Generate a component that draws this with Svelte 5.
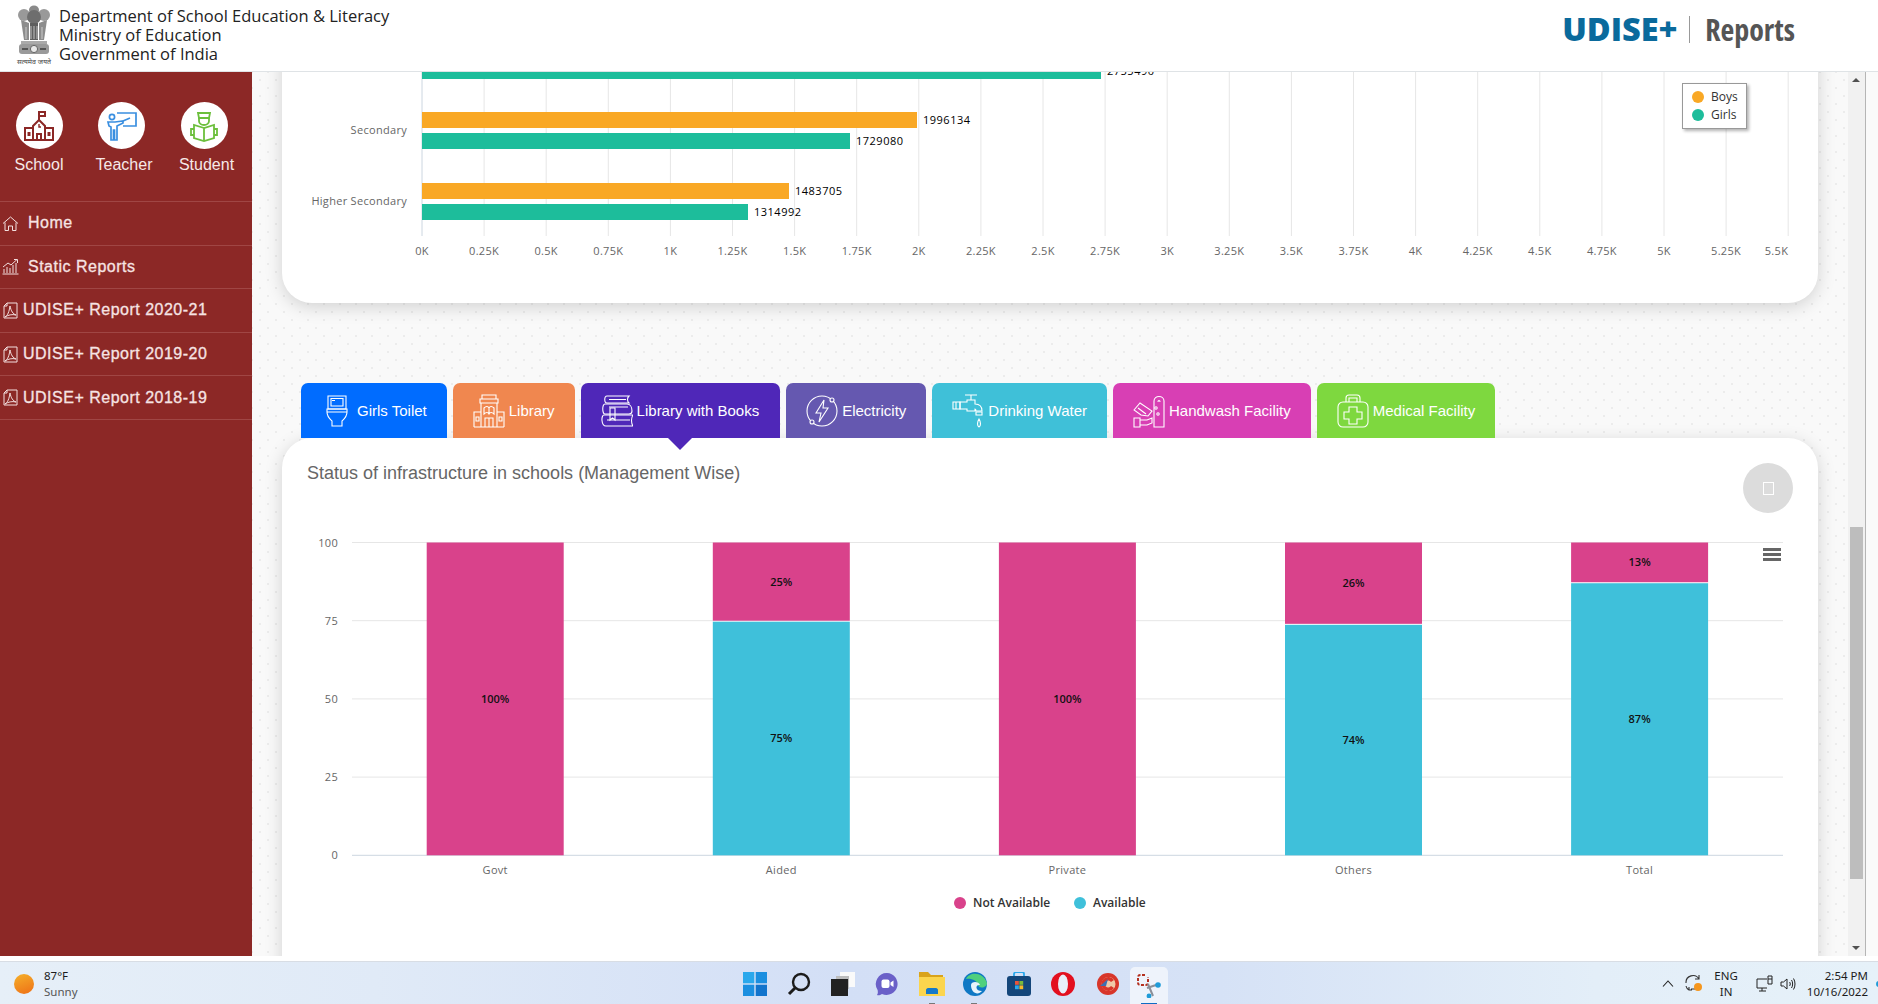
<script>
	const sideLinks = [
		{ label: "Home", icon: "home" },
		{ label: "Static Reports", icon: "chart" },
		{ label: "UDISE+ Report 2020-21", icon: "pdf" },
		{ label: "UDISE+ Report 2019-20", icon: "pdf" },
		{ label: "UDISE+ Report 2018-19", icon: "pdf" }
	];

	const tabs = [
		{ label: "Girls Toilet", icon: "toilet", color: "#006cff" },
		{ label: "Library", icon: "library", color: "#f0874f" },
		{ label: "Library with Books", icon: "books", color: "#4f27b8", active: true },
		{ label: "Electricity", icon: "power", color: "#6558b0" },
		{ label: "Drinking Water", icon: "tap", color: "#3fc0d8" },
		{ label: "Handwash Facility", icon: "wash", color: "#d83fb4" },
		{ label: "Medical Facility", icon: "kit", color: "#7ed83f" }
	];

	// enrolment chart: page coordinates, one K step is 62.1px
	const x0 = 422;
	const step = 62.1;
	const ticks = ["0K","0.25K","0.5K","0.75K","1K","1.25K","1.5K","1.75K","2K","2.25K","2.5K","2.75K","3K","3.25K","3.5K","3.75K","4K","4.25K","4.5K","4.75K","5K","5.25K","5.5K"];
	const hbars = [
		{ y: 63, w: 679, v: "2755490", c: "#1dbd9b" },
		{ y: 112, w: 495, v: "1996134", c: "#f9a825" },
		{ y: 133, w: 428, v: "1729080", c: "#1dbd9b" },
		{ y: 183, w: 367, v: "1483705", c: "#f9a825" },
		{ y: 204, w: 326, v: "1314992", c: "#1dbd9b" }
	];

	// status chart: 0 is at y 855, 100 at y 542.5
	const plotTop = 542.5;
	const plotH = 312.8;
	const cols = [
		{ name: "Govt", no: 100 },
		{ name: "Aided", no: 25 },
		{ name: "Private", no: 100 },
		{ name: "Others", no: 26 },
		{ name: "Total", no: 13, h: 12.7 }
	].map((c, i) => {
		const pink = ((c.h ?? c.no) / 100) * plotH;
		return { ...c, cx: 495.2 + i * 286.1, pink };
	});
	const yticks = [100, 75, 50, 25, 0];
</script>

<div class="screen">
	<header class="top">
		<div class="brand">
			<div class="emblem">
				<svg width="36" height="52" viewBox="0 0 36 52" fill="#777">
					<ellipse cx="18" cy="5" rx="5" ry="4.5" fill="#8a8a8a" />
					<ellipse cx="8" cy="10" rx="6" ry="6" fill="#999" />
					<ellipse cx="28" cy="10" rx="6" ry="6" fill="#999" />
					<ellipse cx="18" cy="12" rx="7" ry="7" fill="#6e6e6e" />
					<path d="M5 15 L13 18 L13 35 L8 35 Z" fill="#8c8c8c" />
					<path d="M31 15 L23 18 L23 35 L28 35 Z" fill="#8c8c8c" />
					<path d="M14 18 L22 18 L22 35 L14 35 Z" fill="#5e5e5e" />
					<path d="M15 21 V34 M18 21 V34 M21 21 V34 M10 22 V34 M26 22 V34" stroke="#ddd" stroke-width="0.8" />
					<rect x="5" y="36" width="26" height="3" fill="#aaa" />
					<rect x="3" y="39" width="30" height="10" rx="3" fill="#9a9a9a" />
					<circle cx="18" cy="44" r="3.6" fill="#e8e8e8" stroke="#666" />
					<path d="M6 44 h6 M24 44 h6" stroke="#555" stroke-width="2" />
				</svg>
				<span class="motto">सत्यमेव जयते</span>
			</div>
			<div class="dept">
				<div>Department of School Education &amp; Literacy</div>
				<div>Ministry of Education</div>
				<div>Government of India</div>
			</div>
		</div>
		<div class="logo">
			<span class="udise">UDISE+</span>
			<span class="bar"></span>
			<span class="reports">Reports</span>
		</div>
	</header>

	<div class="body">
		<aside class="side">
			<div class="roles">
				<div class="role">
					<span class="disc">
						<svg width="32" height="32" viewBox="0 0 32 32" fill="none" stroke="#8c2826" stroke-width="2">
							<path d="M16 10 V2 h6 v4 h-6" />
							<path d="M10 16 L16 10 L22 16 V30 H10 Z" />
							<path d="M10 18 H2 V30 H30 V18 H22" />
							<path d="M14 30 V24 h4 V30" />
							<path d="M16 14 v3 h2" stroke-width="1.4" />
							<rect x="4.5" y="22" width="3" height="4" fill="#8c2826" stroke="none" />
							<rect x="24.5" y="22" width="3" height="4" fill="#8c2826" stroke="none" />
						</svg>
					</span>
					<span>School</span>
				</div>
				<div class="role">
					<span class="disc">
						<svg width="32" height="32" viewBox="0 0 32 32" fill="none" stroke="#3a8fe0" stroke-width="1.7">
							<circle cx="6" cy="7" r="2.6" />
							<path d="M2 12 h7 l8 -1 v2 l-6 3 v14 h-2.500 v-10 h-1 v10 h-2.500 V17 l-2 -1 z" />
							<path d="M11 3 h19 v13 h-13" />
							<path d="M17 11 l7 -3" />
						</svg>
					</span>
					<span class="nudge">Teacher</span>
				</div>
				<div class="role">
					<span class="disc">
						<svg width="32" height="32" viewBox="0 0 32 32" fill="none" stroke="#6cbf3c" stroke-width="1.8">
							<path d="M10 3 h12 l-1 5 h-10 z" />
							<path d="M11 8 v3 a5 4 0 0 0 10 0 v-3" />
							<path d="M16 18 L6 15 V28 L16 31 L26 28 V15 Z M16 18 V31" />
							<path d="M6 19 H3 v6 h3 M26 19 h3 v6 h-3" />
						</svg>
					</span>
					<span class="nudge">Student</span>
				</div>
			</div>
			<nav class="links">
				{#each sideLinks as link}
					<a class="link" class:narrow={link.icon === "pdf"} href="/">
						{#if link.icon === "home"}
							<svg width="17" height="17" viewBox="0 0 17 17" fill="none" stroke="#f3dfdf" stroke-width="1">
								<path d="M1 8.500 L8.500 2 L16 8.500 M3 7.500 V15.500 H6.500 V11 H10.500 V15.500 H14 V7.500" />
							</svg>
						{:else if link.icon === "chart"}
							<svg width="17" height="17" viewBox="0 0 17 17" fill="none" stroke="#f3dfdf" stroke-width="1">
								<path d="M0.500 16 H16.500 M2 15 V11 M5 15 V9 M8 15 V10 M11 15 V7 M14 15 V5" />
								<path d="M1 9 L6 5 L9 7 L15 1.500 M12 1.500 H15.500 V5" />
							</svg>
						{:else}
							<svg width="15" height="17" viewBox="0 0 15 17" fill="none" stroke="#f3dfdf" stroke-width="1">
								<path d="M1 16 V4 L4 1 H14 V16 Z M4 1 V4 H1" />
								<path d="M2 15 C5 13 6 10 7 4 C8 9 10 12 13 13 C9 12 5 13 2 15" />
							</svg>
						{/if}
						<span>{link.label}</span>
					</a>
				{/each}
			</nav>
		</aside>

		<main class="page">
			<section class="card first">
				<svg class="chart" width="1536" height="271" viewBox="282 32 1536 271">
					{#each ticks as t, i}
						<line x1={x0 + i * step} x2={x0 + i * step} y1="32" y2="236" stroke={i ? "#e6e6e6" : "#ccd6e0"} />
						<text class="tick" x={x0 + i * step} y="255" text-anchor={i === 22 ? "end" : "middle"}>{t}</text>
					{/each}
					<text class="tick" x="407" y="134" text-anchor="end">Secondary</text>
					<text class="tick" x="407" y="205" text-anchor="end">Higher Secondary</text>
					{#each hbars as b}
						<rect x={x0} y={b.y} width={b.w} height="16" fill={b.c} />
						<text class="val" x={x0 + b.w + 6} y={b.y + 12}>{b.v}</text>
					{/each}
				</svg>
				<div class="legend-box">
					<div><i style="background:#f9a825"></i>Boys</div>
					<div><i style="background:#1dbd9b"></i>Girls</div>
				</div>
			</section>

			<div class="tabs">
				{#each tabs as tab}
					<div class="tab" class:active={tab.active} style="background:{tab.color}">
						<span class="tab-icon">
							<svg width="32" height="34" viewBox="0 0 32 34" fill="none" stroke="#fff" stroke-width="1.100">
								{#if tab.icon === "toilet"}
									<path d="M7 2 H25 V15 H7 Z M10 4.500 H22 V12 H10 Z M11 6.500 h3" />
									<path d="M6 15 H26 V18 C26 23 22 26 21 27 V32 H11 V27 C10 26 6 23 6 18 Z M6 18 H26" />
								{:else if tab.icon === "library"}
									<path d="M9 1 H23 V5 H9 Z M7 5 H25 V9 H7 Z M8 9 V33 M24 9 V33 M1 33 H31 M8 18 H1 V33 M24 18 H31 V33" />
									<path d="M11 14 C13 12 15 12 16 14 C17 12 19 12 21 14 V20 C19 18 17 18 16 20 C15 18 13 18 11 20 Z M16 14 V20" />
									<path d="M12 33 V24 H20 V33 M16 24 V33 M3 23 H6 V27 H3 Z M26 23 H29 V27 H26 Z" />
								{:else if tab.icon === "books"}
									<path d="M6 2 H28 C26 4 26 7 28 9 H6 C3 9 3 2 6 2 Z M8 5.500 H25" />
									<path d="M4 10 H26 C29 10 31 13 31 17 C31 19 30 20 28 20 H4 C1 20 1 10 4 10 Z M8 13 H27" />
									<path d="M3 21 H32 C30 24 30 29 32 32 H5 C0 32 0 21 3 21 Z M6 26 H29" />
									<path d="M9 14 H14 V26 L11.500 24 L9 26 Z" />
								{:else if tab.icon === "power"}
									<circle cx="16" cy="17" r="15" />
									<path d="M18 6 L10 19 H15 L13 28 L22 14 H17 Z" />
									<circle cx="26" cy="6" r="2" fill="#6558b0" />
									<circle cx="6" cy="28" r="2" fill="#6558b0" />
								{:else if tab.icon === "tap"}
									<path d="M13 1 H25 M19 1 V6 M15 6 H23 V10 C28 10 30 13 30 17 H24 C24 16 24 15 23 15 V17 H15 V15 H8 V8 H15 Z" />
									<path d="M1 8 H8 V15 H1 Z M4 8 V15 M24 18 H30 V21 H24 Z" />
									<path d="M27 25 C25 28 25 32 27 33 C29 32 29 28 27 25 Z" />
								{:else if tab.icon === "wash"}
									<path d="M21 33 V7 C21 1 31 1 31 7 V33 Z M25 8 C25 6 27 6 27 8" />
									<path d="M1 16 L7 9 L19 17 L15 22 L8 21 Z M5 14 L13 20" />
									<path d="M1 24 H7 V33 H1 Z M7 26 H14 L19 24 V29 L14 31 H7" />
									<circle cx="23" cy="14" r="1.200" />
									<circle cx="25" cy="20" r="1.200" />
								{:else}
									<rect x="1" y="8" width="30" height="25" rx="5" />
									<path d="M9 8 V4 C9 2 10 1 12 1 H20 C22 1 23 2 23 4 V8 M12 8 V4 H20 V8" />
									<path d="M12 13 H20 V18 H25 V25 H20 V30 H12 V25 H7 V18 H12 Z" />
								{/if}
							</svg>
						</span>
						<span>{tab.label}</span>
					</div>
				{/each}
			</div>

			<section class="card second">
				<h2>Status of infrastructure in schools (Management Wise)</h2>
				<button class="round" aria-label="Download"><span></span></button>
				<svg class="chart" width="1536" height="530" viewBox="282 438 1536 530">
					{#each yticks as v, i}
						<line x1="352" x2="1783" y1={plotTop + i * 78.2} y2={plotTop + i * 78.2} stroke={v ? "#e6e6e6" : "#ccd6e0"} />
						<text class="tick" x="338" y={plotTop + i * 78.2 + 4} text-anchor="end">{v}</text>
					{/each}
					{#each cols as c}
						<rect x={c.cx - 68.500} y={plotTop} width="137" height={c.pink} fill="#d9428b" />
						{#if c.no < 100}
							<rect x={c.cx - 68.500} y={plotTop + c.pink + 1} width="137" height={plotH - c.pink - 1} fill="#3fc0da" />
							<text class="pct" x={c.cx} y={plotTop + c.pink / 2 + 4} text-anchor="middle">{c.no}%</text>
							<text class="pct" x={c.cx} y={plotTop + c.pink + (plotH - c.pink) / 2 + 4} text-anchor="middle">{100 - c.no}%</text>
						{:else}
							<text class="pct" x={c.cx} y={plotTop + plotH / 2 + 4} text-anchor="middle">100%</text>
						{/if}
						<text class="tick" x={c.cx} y="874" text-anchor="middle">{c.name}</text>
					{/each}
					<circle cx="960" cy="903" r="6" fill="#d9428b" />
					<text class="key" x="973" y="907">Not Available</text>
					<circle cx="1080" cy="903" r="6" fill="#3fc0da" />
					<text class="key" x="1093" y="907">Available</text>
					<path d="M1763 549.500 h18 M1763 554.500 h18 M1763 559.500 h18" stroke="#666" stroke-width="3" />
				</svg>
			</section>
		</main>

		<div class="scroll">
			<span class="arrow up"></span>
			<span class="thumb"></span>
			<span class="arrow down"></span>
		</div>
		<div class="edge"></div>
	</div>

	<div class="gap"></div>

	<footer class="taskbar">
		<div class="weather">
			<span class="sun"></span>
			<div>
				<div class="temp">87°F</div>
				<div class="sky">Sunny</div>
			</div>
		</div>
		<div class="apps">
			<!-- start -->
			<svg width="24" height="24" viewBox="0 0 24 24">
				<rect width="11.300" height="11.300" fill="#2aa8ec" />
				<rect x="12.700" width="11.300" height="11.300" fill="#1b8fe0" />
				<rect y="12.700" width="11.300" height="11.300" fill="#1b8fe0" />
				<rect x="12.700" y="12.700" width="11.300" height="11.300" fill="#1274cc" />
			</svg>
			<!-- search -->
			<svg width="24" height="24" viewBox="0 0 24 24" fill="none" stroke="#1c1c1c" stroke-width="2.400">
				<circle cx="14" cy="10" r="8" />
				<path d="M8 16 L2 22" stroke-width="3" />
			</svg>
			<!-- task view -->
			<svg width="24" height="24" viewBox="0 0 24 24">
				<rect x="9" y="0" width="15" height="15" fill="#fafafa" />
				<rect x="5" y="4" width="13" height="13" fill="#bdbdbd" />
				<rect x="0" y="7" width="17" height="17" fill="#222" />
			</svg>
			<!-- chat -->
			<svg width="24" height="24" viewBox="0 0 24 24">
				<path d="M12 1 A11 11 0 1 1 7 22 C5 23.500 3 23.500 2 23 C3 21.500 3 20 2.600 18 A11 11 0 0 1 12 1 Z" fill="#6a60c8" />
				<rect x="6.500" y="7.500" width="8" height="8.500" rx="2" fill="#fff" />
				<path d="M15.500 10.500 L18.500 8.500 V15 L15.500 13 Z" fill="#fff" />
			</svg>
			<!-- explorer -->
			<svg class="tight" width="26" height="24" viewBox="0 0 26 24">
				<path d="M0 0 H9 L12 3 H24 V8 H0 Z" fill="#d9a31c" />
				<rect y="5" width="26" height="19" fill="#fbd54e" />
				<path d="M7 22 V18 C7 17 8 16 9 16 H17 C18 16 19 17 19 18 V22 Z" fill="#1479c9" />
			</svg>
			<!-- edge -->
			<svg width="24" height="24" viewBox="0 0 24 24">
				<circle cx="12" cy="12" r="12" fill="#0f78c4" />
				<path d="M3 7 C6 0 20 -1 24 11 C24 16 16 17 15 13 C15 9 8 6 3 7 Z" fill="#4fd07e" />
				<path d="M8 13 C8 9 16 9 17 13 C12 12 12 19 19 19 C15 24 8 21 8 13 Z" fill="#e7f3fb" />
			</svg>
			<!-- store -->
			<svg width="24" height="24" viewBox="0 0 24 24">
				<path d="M7 5 V2 C7 1 8 0 9 0 H15 C16 0 17 1 17 2 V5" fill="none" stroke="#2aa8ec" stroke-width="1.800" />
				<rect y="4" width="24" height="20" rx="3" fill="#14467a" />
				<rect x="8" y="9" width="3.800" height="3.800" fill="#e8553a" />
				<rect x="12.400" y="9" width="3.800" height="3.800" fill="#7ab93b" />
				<rect x="8" y="13.400" width="3.800" height="3.800" fill="#2aa8ec" />
				<rect x="12.400" y="13.400" width="3.800" height="3.800" fill="#f5b92a" />
			</svg>
			<!-- opera -->
			<svg class="loose" width="24" height="24" viewBox="0 0 24 24">
				<ellipse cx="12" cy="12" rx="12" ry="12" fill="#e3101f" />
				<ellipse cx="12" cy="12" rx="5" ry="9.500" fill="#e8eef9" />
			</svg>
			<!-- red app -->
			<svg width="22" height="22" viewBox="0 0 22 22">
				<circle cx="11" cy="11" r="11" fill="#d8362a" />
				<circle cx="11.500" cy="11" r="7" fill="#f0c9a8" />
				<path d="M17 7 A7 7 0 1 0 17 15 L14 13 A3.500 3.500 0 1 1 14 9 Z" fill="#d8362a" />
				<path d="M3 13 L11 6 L9 13 Z" fill="#3d6fb0" />
			</svg>
			<!-- snip, the active one -->
			<span class="active-app">
				<svg width="24" height="24" viewBox="0 0 24 24" fill="none">
					<path d="M8 1 H3 C2 1 1 2 1 3 V9 C1 10 2 11 3 11 H9 C10 11 11 10 11 9 V3" stroke="#b5301e" stroke-width="2" stroke-dasharray="3 1.500" />
					<path d="M11 10 L16 22 M19 11 L10 14" stroke="#8b8f98" stroke-width="2" />
					<circle cx="21" cy="11" r="2.800" fill="#1f9bd8" />
					<circle cx="12" cy="22" r="2.400" fill="#1f9bd8" />
				</svg>
				<i></i>
			</span>
			<span class="run one"></span>
			<span class="run two"></span>
		</div>
		<div class="tray">
			<svg class="caret" width="12" height="7" viewBox="0 0 12 7" fill="none" stroke="#222" stroke-width="1.100"><path d="M1 6.500 L6 1 L11 6.500" /></svg>
			<svg width="20" height="20" viewBox="0 0 20 20" fill="none" stroke="#333" stroke-width="1.100">
				<path d="M2 9 A7 7 0 0 1 15 5 M15 1 V5 H11" />
				<path d="M13 15 H7 M5 16 A6 6 0 0 1 2 12 M5 13 V16 H8" />
				<circle cx="14" cy="13" r="4" fill="#f5961d" stroke="none" />
			</svg>
			<div class="lang"><div>ENG</div><div>IN</div></div>
			<svg class="net" width="18" height="18" viewBox="0 0 18 18" fill="none" stroke="#222" stroke-width="1"><path d="M11 4 H1 V13 H11 M6 13 V16 M3 16 H10 M12 1 H16 V9 H12 Z M12 4 H16" /></svg>
			<svg width="16" height="14" viewBox="0 0 16 14" fill="none" stroke="#222" stroke-width="1"><path d="M1 5 H3.500 L7 2 V12 L3.500 9 H1 Z M9.500 5 C10.500 6 10.500 8 9.500 9 M11.500 3 C13 5 13 9 11.500 11 M13.500 1.500 C15.500 4.500 15.500 9.500 13.500 12.500" /></svg>
			<div class="clock"><div>2:54 PM</div><div>10/16/2022</div></div>
		</div>
		<span class="peek"></span>
	</footer>
</div>

<style>
	:global(body) {
		margin: 0;
		background: #fff;
	}

	.screen {
		width: 1878px;
		height: 1004px;
		display: flex;
		flex-direction: column;
		overflow: hidden;
		font-family: "Liberation Sans", sans-serif;
	}

	.top {
		height: 71px;
		flex: none;
		display: flex;
		align-items: center;
		justify-content: space-between;
		background: #fff;
		border-bottom: 1px solid #dfe3e6;
		position: relative;
		z-index: 5;
	}

	.brand {
		display: flex;
		align-items: center;
		padding-left: 14px;
		gap: 5px;
	}

	.emblem {
		width: 40px;
		display: flex;
		flex-direction: column;
		align-items: center;
	}

	.motto {
		font-family: "Noto Sans", sans-serif;
		font-size: 7px;
		line-height: 9px;
		color: #444;
		white-space: nowrap;
	}

	.dept {
		font-family: "Open Sans", sans-serif;
		font-size: 16.5px;
		line-height: 19px;
		color: #222;
		margin-top: -3px;
	}

	.logo {
		display: flex;
		align-items: center;
		padding: 0 83px 12px 0;
	}

	.udise {
		font-family: "Open Sans", sans-serif;
		font-weight: 800;
		font-size: 32.5px;
		color: #0a6a9c;
		line-height: 1;
	}

	.bar {
		width: 1px;
		height: 27px;
		background: #999;
		margin: 0 15px 0 11.5px;
	}

	.reports {
		font-family: "Open Sans", sans-serif;
		font-weight: 700;
		font-stretch: 75%;
		font-size: 30px;
		color: #555;
		line-height: 1;
	}

	.body {
		height: 884px;
		flex: none;
		display: flex;
	}

	.side {
		width: 252px;
		flex: none;
		background: #8c2826;
		color: #f6e8e8;
	}

	.roles {
		height: 129px;
		display: flex;
		gap: 16.5px;
		border-bottom: 1px solid #a04644;
		padding-left: 6px;
	}

	.role {
		width: 66px;
		display: flex;
		flex-direction: column;
		align-items: center;
		padding-top: 30px;
		font-size: 16px;
		gap: 7px;
	}

	.nudge {
		margin-left: 5px;
	}

	.disc {
		width: 47px;
		height: 47px;
		border-radius: 50%;
		background: #fff;
		display: flex;
		align-items: center;
		justify-content: center;
	}

	.link {
		height: 42.6px;
		display: flex;
		align-items: center;
		gap: 9px;
		padding-left: 2px;
		border-bottom: 1px solid #a04644;
		text-decoration: none;
		color: #f6e3e3;
		font-size: 16px;
		letter-spacing: 0.5px;
		-webkit-text-stroke: 0.3px #f6e3e3;
	}

	.link.narrow {
		gap: 5px;
		padding-left: 3px;
	}

	.page {
		width: 1596px;
		flex: none;
		overflow: hidden;
		padding-left: 30px;
		box-sizing: border-box;
		background-color: #f9f9f9;
		background-image: radial-gradient(#ececec 1px, transparent 1.500px), radial-gradient(#ececec 1px, transparent 1.500px);
		background-size: 16px 16px;
		background-position: 0 0, 8px 8px;
	}

	.card {
		width: 1536px;
		background: #fff;
		position: relative;
		box-shadow: 0 4px 18px rgba(0, 0, 0, 0.16);
	}

	.first {
		height: 271px;
		margin-top: -40px;
		border-radius: 0 0 30px 30px;
	}

	.second {
		height: 540px;
		border-radius: 30px 30px 0 0;
	}

	.chart {
		display: block;
	}

	.second .chart {
		position: absolute;
		left: 0;
		top: 0;
	}

	.chart text {
		font-family: "Open Sans", sans-serif;
	}

	.tick {
		font-size: 11px;
		fill: #666;
		letter-spacing: 0.3px;
	}

	.val {
		font-size: 11px;
		font-weight: 500;
		fill: #000;
		letter-spacing: 0.5px;
	}

	.pct {
		font-size: 11px;
		font-weight: 600;
		fill: #111;
	}

	.key {
		font-size: 12px;
		fill: #333;
		font-weight: 600;
	}

	.legend-box {
		position: absolute;
		left: 1400px;
		top: 51px;
		width: 63px;
		height: 40px;
		padding: 4px 0 0 0;
		background: #fff;
		border: 1px solid #999;
		box-shadow: 2px 2px 3px rgba(0, 0, 0, 0.3);
		font-family: "Open Sans", sans-serif;
		font-size: 12px;
		color: #333;
		line-height: 18px;
	}

	.legend-box i {
		display: inline-block;
		width: 12px;
		height: 12px;
		border-radius: 50%;
		margin: 0 7px 0 9px;
		vertical-align: -2px;
	}

	.tabs {
		display: flex;
		gap: 6px;
		padding: 80px 0 0 19px;
		position: relative;
		z-index: 2;
	}

	.tab {
		height: 55px;
		box-sizing: border-box;
		padding: 0 20px;
		display: flex;
		align-items: center;
		gap: 4px;
		border-radius: 7px 7px 0 0;
		color: #fff;
		font-size: 15px;
		position: relative;
		white-space: nowrap;
	}

	.tab.active {
		padding-right: 21px;
	}

	.tab-icon {
		display: flex;
		width: 32px;
		flex: none;
	}

	.tab.active::after {
		content: "";
		position: absolute;
		top: 100%;
		left: 50%;
		margin-left: -12px;
		border-left: 12px solid transparent;
		border-right: 12px solid transparent;
		border-top: 12px solid #4f27b8;
	}

	h2 {
		margin: 0;
		padding: 25px 0 0 25px;
		font-size: 18px;
		font-weight: 400;
		line-height: 21px;
		color: #666;
		position: relative;
		z-index: 1;
	}

	.round {
		position: absolute;
		left: 1461px;
		top: 25px;
		width: 50px;
		height: 50px;
		padding: 0;
		border: 0;
		border-radius: 50%;
		background: #dcdcdc;
		display: flex;
		align-items: center;
		justify-content: center;
		z-index: 1;
	}

	.round span {
		width: 9px;
		height: 11px;
		border: 1px solid #fff;
	}

	.scroll {
		width: 17px;
		flex: none;
		background: #f1f1f1;
		position: relative;
	}

	.thumb {
		position: absolute;
		left: 2px;
		right: 2px;
		top: 455px;
		height: 352px;
		background: #bdbdbd;
	}

	.arrow {
		position: absolute;
		left: 4px;
		border-left: 4px solid transparent;
		border-right: 4px solid transparent;
	}

	.arrow.up {
		top: 6px;
		border-bottom: 4px solid #505050;
	}

	.arrow.down {
		bottom: 6px;
		border-top: 4px solid #505050;
	}

	.edge {
		flex: 1;
		border-left: 1px solid #b5b5b5;
		background: #fafafa;
	}

	.gap {
		height: 5px;
		flex: none;
		background: #fff;
	}

	.taskbar {
		height: 44px;
		flex: none;
		display: flex;
		align-items: center;
		position: relative;
		background: linear-gradient(90deg, #e6eff8 0%, #e0eaf7 20%, #d3dff6 45%, #d6e2f6 65%, #e3eef8 85%, #e6f1f9 100%);
		border-top: 1px solid #d8dde4;
		box-sizing: border-box;
		font-family: "Noto Sans", sans-serif;
		font-size: 11.5px;
		color: #1c1c1c;
	}

	.weather {
		display: flex;
		align-items: center;
		gap: 10px;
		padding-left: 14px;
		line-height: 16px;
		width: 730px;
		box-sizing: border-box;
	}

	.sun {
		width: 20px;
		height: 20px;
		border-radius: 50%;
		background: linear-gradient(160deg, #f5b02a, #ee6f16);
	}

	.sky {
		color: #555;
	}

	.apps {
		display: flex;
		align-items: center;
		gap: 20px;
		padding-left: 13px;
		height: 100%;
		position: relative;
	}

	.tight {
		margin-right: -2px;
	}

	.loose {
		margin-right: 2px;
	}

	.active-app {
		width: 38px;
		height: 38px;
		margin-top: 5px;
		margin-left: -9px;
		border-radius: 5px 5px 0 0;
		background: #eef3fb;
		display: flex;
		align-items: center;
		justify-content: center;
		position: relative;
	}

	.active-app i {
		position: absolute;
		left: 11px;
		bottom: 0;
		width: 16px;
		height: 2px;
		background: #0f6cc4;
	}

	.run {
		position: absolute;
		bottom: 0;
		width: 6px;
		height: 2px;
		background: #777;
	}

	.run.one {
		left: 199px;
	}

	.run.two {
		left: 241px;
	}

	.tray {
		position: absolute;
		right: 10px;
		top: 0;
		bottom: 0;
		display: flex;
		align-items: center;
	}

	.caret {
		margin-right: 10px;
	}

	.lang {
		text-align: center;
		line-height: 16px;
		margin: 0 18px 0 10px;
	}

	.net {
		margin-right: 6px;
	}

	.clock {
		text-align: right;
		line-height: 16px;
		margin-left: 11px;
		white-space: nowrap;
	}

	.peek {
		position: absolute;
		right: -4px;
		top: 19px;
		width: 6px;
		height: 6px;
		border-radius: 50%;
		background: #1f9bd8;
	}
</style>
